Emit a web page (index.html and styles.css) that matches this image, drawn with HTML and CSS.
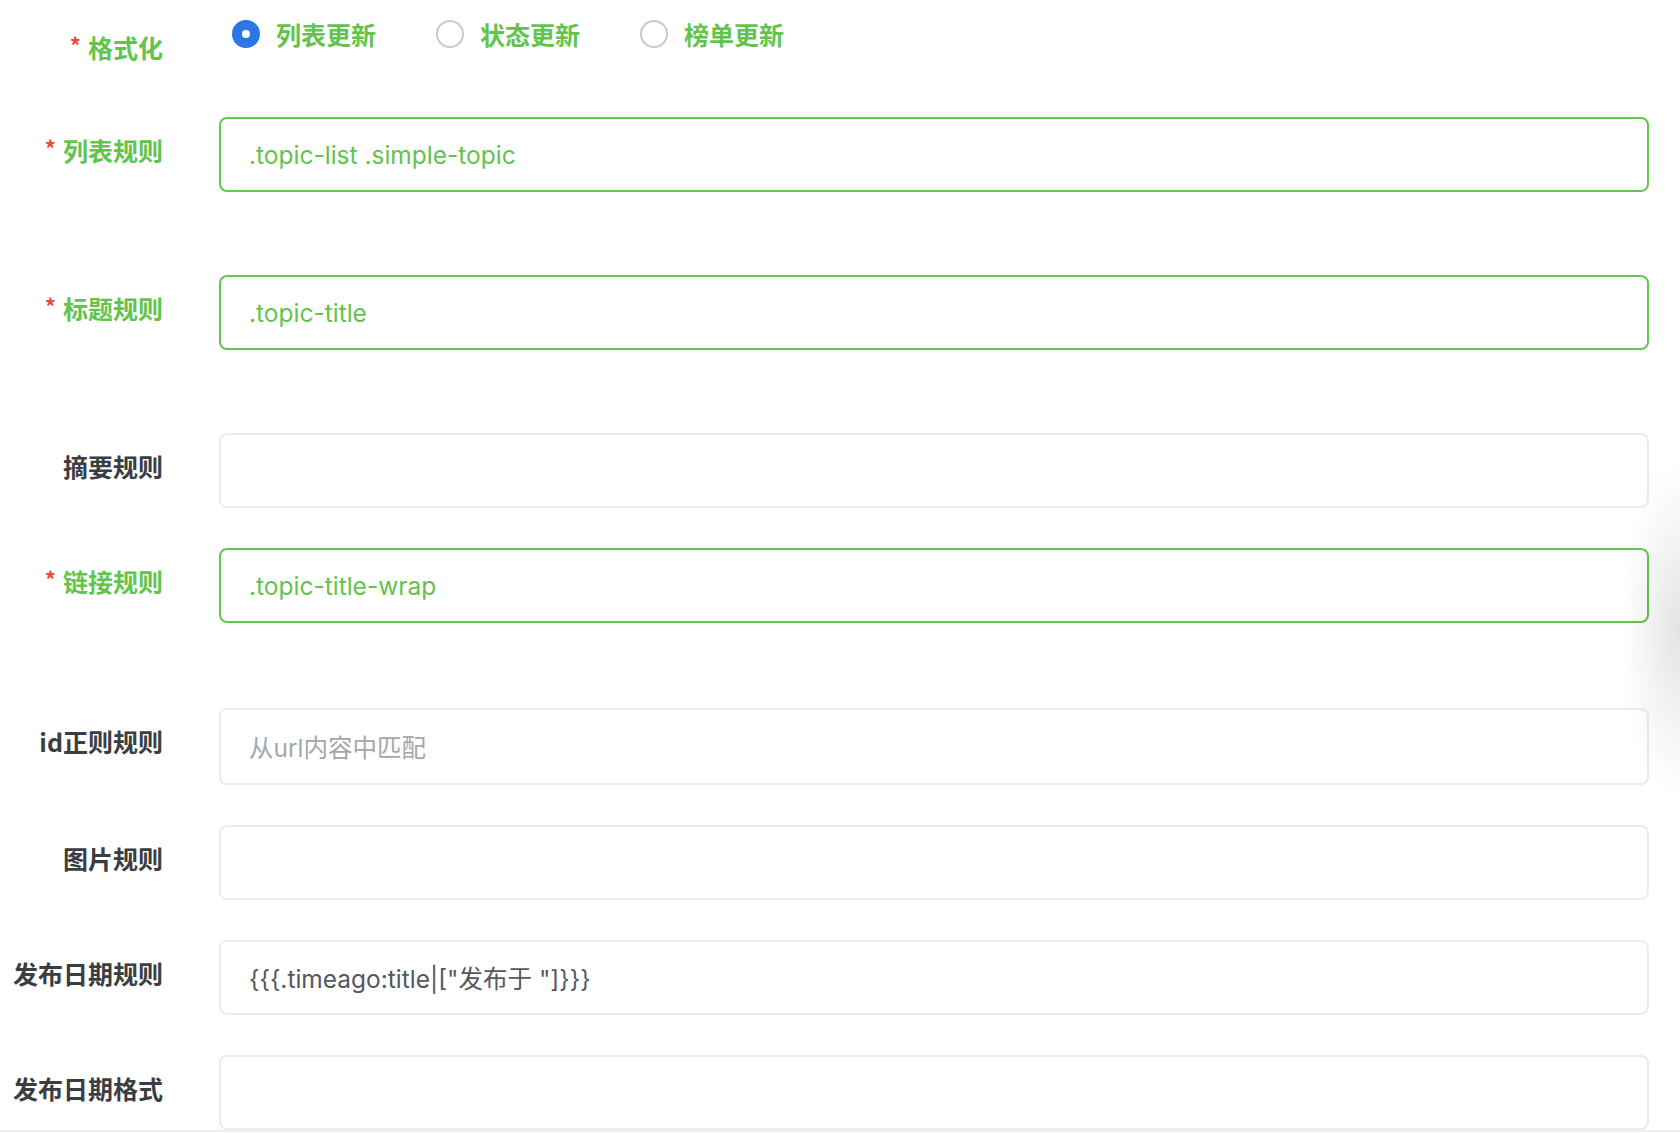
FILE: index.html
```html
<!DOCTYPE html>
<html lang="zh-CN">
<head>
    <meta charset="UTF-8">
    <meta name="viewport" content="width=device-width, initial-scale=1.0">
    <link rel="stylesheet" href="styles.css">
</head>
<body>
    <form class="rule-form">
        <!-- 格式化 -->
        <div class="form-item radio-row">
            <label class="form-label is-required is-success">格式化</label>
            <div class="radio-group">
                <label class="radio is-checked"><span class="radio-inner"></span><span class="radio-label">列表更新</span></label>
                <label class="radio"><span class="radio-inner"></span><span class="radio-label">状态更新</span></label>
                <label class="radio"><span class="radio-inner"></span><span class="radio-label">榜单更新</span></label>
            </div>
        </div>

        <div class="form-item spaced">
            <label class="form-label is-required is-success">列表规则</label>
            <div class="input is-success">.topic-list .simple-topic</div>
        </div>

        <div class="form-item spaced">
            <label class="form-label is-required is-success">标题规则</label>
            <div class="input is-success">.topic-title</div>
        </div>

        <div class="form-item">
            <label class="form-label">摘要规则</label>
            <div class="input"></div>
        </div>

        <div class="form-item spaced wide">
            <label class="form-label is-required is-success">链接规则</label>
            <div class="input is-success">.topic-title-wrap</div>
        </div>

        <div class="form-item">
            <label class="form-label">id正则规则</label>
            <div class="input tall placeholder">从url内容中匹配</div>
        </div>

        <div class="form-item">
            <label class="form-label">图片规则</label>
            <div class="input"></div>
        </div>

        <div class="form-item">
            <label class="form-label">发布日期规则</label>
            <div class="input">{{{.timeago:title|["发布于 "]}}}</div>
        </div>

        <div class="form-item last">
            <label class="form-label">发布日期格式</label>
            <div class="input"></div>
        </div>
    </form>
    <div class="divider"></div>

    <!-- shadow of the side panel peeking in -->
    <div class="side-shadow"></div>
</body>
</html>
```

FILE: styles.css
```css
* {
    box-sizing: border-box;
}

html, body {
    margin: 0;
    padding: 0;
    background: #fff;
    overflow: hidden;
}

body {
    font-family: Inter, "Noto Sans CJK SC", sans-serif;
    color: #303133;
    height: 1133px;
    position: relative;
}

.rule-form {
    padding-right: 31px;
}

.form-item {
    display: flex;
    align-items: flex-start;
    margin-bottom: 40px;
}

.form-item.spaced {
    margin-bottom: 83px;
}

.form-item.spaced.wide {
    margin-bottom: 85px;
}

.form-item.last {
    margin-bottom: 0;
}

.form-label {
    flex-shrink: 0;
    width: 163px;
    margin-right: 56px;
    text-align: right;
    font-family: "Noto Sans CJK SC", sans-serif;
    font-size: 25px;
    font-weight: 700;
    line-height: 67px;
    color: #3a3d42;
    white-space: nowrap;
}

.form-label.is-success {
    color: #62c44c;
}

.form-label.is-required::before {
    content: '*';
    color: #f0483e;
    font-size: 22px;
    margin-right: 7px;
    position: relative;
    top: -4px;
}

/* radio row */
.radio-row {
    margin-bottom: 35px;
}

.radio-row .form-label {
    margin-top: 14px;
}

.radio-group {
    display: flex;
    align-items: center;
    height: 68px;
    margin-left: 13px;
}

.radio {
    display: flex;
    align-items: center;
    margin-right: 60px;
}

.radio-inner {
    width: 28px;
    height: 28px;
    border-radius: 50%;
    border: 2px solid #c6c9cf;
    background: #fff;
    margin-right: 16px;
}

.radio.is-checked .radio-inner {
    border: 10px solid #2b77e4;
}

.radio-label {
    font-family: "Noto Sans CJK SC", sans-serif;
    font-size: 25px;
    font-weight: 700;
    color: #62c44c;
}

/* inputs */
.input {
    flex: 1;
    height: 75px;
    border: 2px solid #eaebf0;
    border-radius: 8px;
    padding: 0 28px;
    display: flex;
    align-items: center;
    font-size: 24.5px;
    color: #55585e;
    white-space: nowrap;
}

.input.tall {
    height: 77px;
}

.input.is-success {
    border-color: #62c84f;
    color: #62c44c;
}

.input.placeholder {
    color: #a3a6ad;
}

.divider {
    height: 2px;
    background: #eceef2;
}

.side-shadow {
    position: absolute;
    top: 450px;
    left: 1620px;
    width: 60px;
    height: 360px;
    background: radial-gradient(ellipse 60px 170px at 100% 50%, rgba(0, 0, 0, 0.11), rgba(0, 0, 0, 0.04) 60%, rgba(0, 0, 0, 0) 100%);
    pointer-events: none;
}
```
